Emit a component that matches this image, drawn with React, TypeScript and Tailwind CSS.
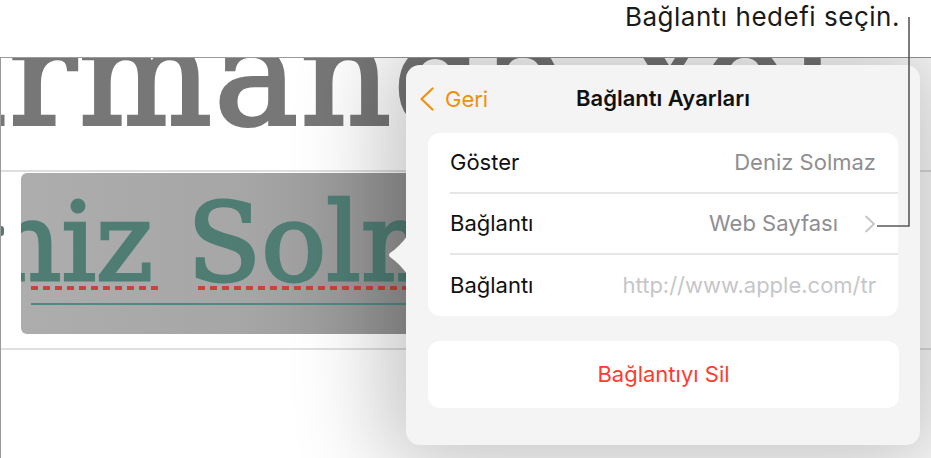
const ROWS = [
  { label: 'Göster', value: 'Deniz Solmaz', tone: 'text-[#8e8e93]', chevron: false },
  { label: 'Bağlantı', value: 'Web Sayfası', tone: 'text-[#8e8e93]', chevron: true },
  { label: 'Bağlantı', value: 'http://www.apple.com/tr', tone: 'text-[#c6c6c9]', chevron: false },
]

const TYPE = "font-['DejaVu_Serif',serif] [paint-order:stroke_fill]"

export default function App() {
  return (
    <div className="relative flex h-[458px] w-[931px] flex-col overflow-hidden bg-white font-['Inter',sans-serif]">
      {/* ── caption band (sits above the popover shadow) ── */}
      <div className="relative z-20 flex h-[57px] shrink-0 justify-end bg-white pr-[31px]">
        <span className="mt-[1px] text-[26px] leading-[32px] tracking-[0.02em] text-[#1a1a1a]">
          Bağlantı hedefi seçin.
        </span>
      </div>

      {/* ── document page ────────────────────────────── */}
      <div className="relative flex-1 border-l border-t border-[#9a9a9a] bg-white">
        <div className="h-[114px] overflow-hidden border-b-2 border-[#dedede]">
          <div
            className={`${TYPE} -ml-[78px] -mt-[52px] whitespace-nowrap text-[140px] leading-[140px] tracking-[0.02em] text-[#777777] [-webkit-text-stroke:4px_#777777]`}
          >
            armanda Yol
          </div>
        </div>

        <div className="relative ml-[20px] mt-[1px] h-[161px] w-[440px] overflow-hidden rounded-[6px] bg-gradient-to-r from-[#adadad] via-[#a6a6a6] to-[#8e8e8e]">
          <div
            className={`${TYPE} absolute -left-[29px] top-[16px] whitespace-nowrap text-[108px] leading-[108px] text-[#4f7d74] [-webkit-text-stroke:3px_#4f7d74]`}
          >
            niz Solmaz
          </div>
          <div className="absolute left-[10px] top-[113px] h-[4px] w-[128px] bg-[repeating-linear-gradient(90deg,#c7433b_0_7px,transparent_7px_12px)]" />
          <div className="absolute left-[177px] top-[113px] h-[4px] w-[260px] bg-[repeating-linear-gradient(90deg,#c7433b_0_7px,transparent_7px_12px)]" />
          <div className="absolute left-[10px] top-[130px] h-[2px] w-[430px] bg-[#4f8a80]" />
        </div>

        <div className="mt-[14px] h-[2px] w-full bg-[#e0e0e0]" />
        <span className="absolute left-0 top-[168px] h-[10px] w-[3px] rounded-r bg-[#4f7d74]" />
      </div>

      {/* ── link settings popover ─────────────────────── */}
      <div className="absolute left-[406px] top-[65px] z-10 h-[380px] w-[514px] rounded-[14px] bg-[#f4f4f5] shadow-[0_0_90px_24px_rgba(0,0,0,0.23)]">
        <svg className="absolute -left-[18px] top-[170px]" width="20" height="40" viewBox="0 0 20 40">
          <path d="M20 0 C14 8 8 14 2 18 Q0 20 2 22 C8 26 14 32 20 40 Z" fill="#f4f4f5" />
        </svg>

        <div className="relative flex h-[68px] items-center justify-center">
          <button className="absolute left-[14px] top-[22px] flex items-center text-[#f0900c]">
            <svg width="14" height="24" viewBox="0 0 14 24" fill="none">
              <path d="M12.5 1.5 L1.5 12 L12.5 22.5" stroke="currentColor" strokeWidth="2.2" strokeLinecap="round" strokeLinejoin="round" />
            </svg>
            <span className="ml-[11px] text-[22px] leading-[24px]">Geri</span>
          </button>
          <h2 className="-mt-[2px] text-[22px] font-semibold text-[#111]">Bağlantı Ayarları</h2>
        </div>

        <div className="mx-[22px] overflow-hidden rounded-[12px] bg-white">
          {ROWS.map((r, i) => (
            <div key={i} className="flex h-[61px] items-center pl-[22px]">
              <div
                className={`flex h-full flex-1 items-center justify-between pr-[22px] ${
                  i < ROWS.length - 1 ? 'border-b-2 border-[#e6e6e8]' : ''
                }`}
              >
                <span className="text-[22px] text-[#111]">{r.label}</span>
                <span className={`flex items-center text-[22px] ${r.tone}`}>
                  {r.value}
                  {r.chevron && (
                    <svg className="ml-[26px]" width="12" height="18" viewBox="0 0 12 18" fill="none">
                      <path d="M2 1.5 L10 9 L2 16.5" stroke="#c4c4c7" strokeWidth="1.8" strokeLinecap="round" strokeLinejoin="round" />
                    </svg>
                  )}
                </span>
              </div>
            </div>
          ))}
        </div>

        <button className="mx-[22px] mt-[25px] flex h-[67px] w-[471px] items-center justify-center rounded-[12px] bg-white text-[22px] text-[#ff3b30]">
          Bağlantıyı Sil
        </button>
      </div>

      {/* ── callout leader ───────────────────────────── */}
      <svg className="pointer-events-none absolute inset-0 z-30" width="931" height="458">
        <path d="M909 17 V226 H877" fill="none" stroke="#5a5a5a" strokeWidth="1.6" />
      </svg>
    </div>
  )
}
